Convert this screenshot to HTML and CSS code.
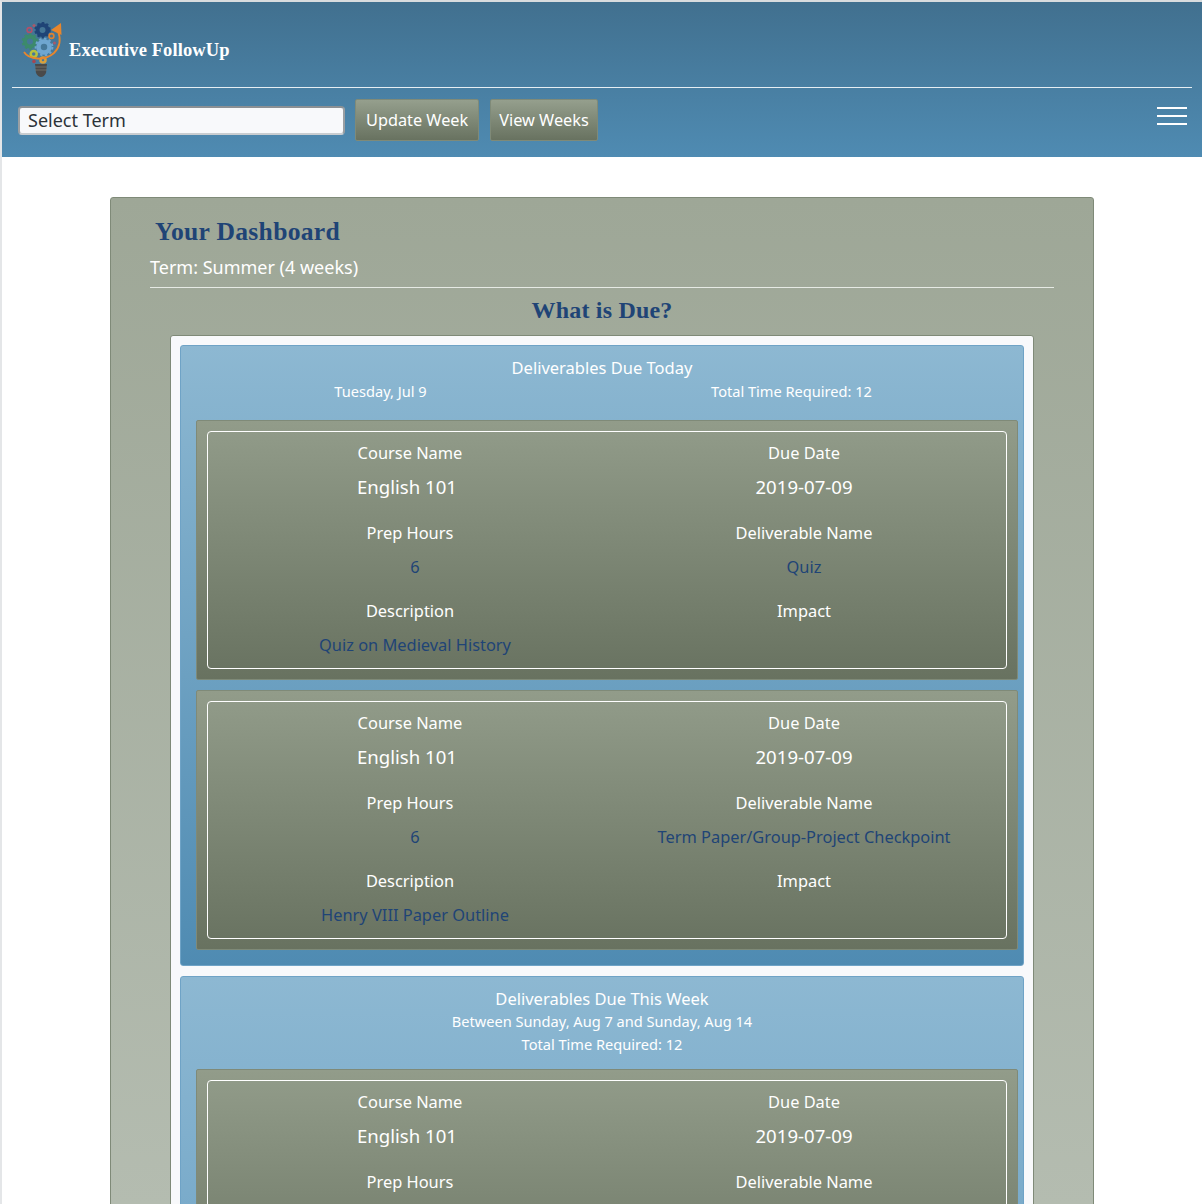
FILE: index.html
```html
<!DOCTYPE html>
<html lang="en">
<head>
<meta charset="utf-8">
<title>Executive FollowUp</title>
<link rel="stylesheet" href="styles.css">
</head>
<body>
<header class="topbar">
	<div class="brand">
		<svg class="logo" width="44" height="56" viewBox="19 22 44 56">
			<circle cx="41.5" cy="30" r="5" fill="none" stroke="#1f4476" stroke-width="4"/>
			<circle cx="41.5" cy="30" r="7.2" fill="none" stroke="#1f4476" stroke-width="2" stroke-dasharray="2.5 2.2"/>
			<circle cx="29" cy="41.5" r="5" fill="none" stroke="#3c8a6c" stroke-width="4"/>
			<circle cx="29" cy="41.5" r="7.4" fill="none" stroke="#3c8a6c" stroke-width="2" stroke-dasharray="2.5 2.3"/>
			<circle cx="43" cy="47" r="5.5" fill="none" stroke="#6fa6d0" stroke-width="4.5"/>
			<circle cx="43" cy="47" r="8.4" fill="none" stroke="#6fa6d0" stroke-width="2" stroke-dasharray="2.5 2.4"/>
			<circle cx="32.7" cy="54" r="3" fill="none" stroke="#b5c23f" stroke-width="2.5"/>
			<circle cx="42" cy="60" r="2.5" fill="none" stroke="#d9a13c" stroke-width="2.5"/>
			<circle cx="50.5" cy="36" r="2.4" fill="none" stroke="#e0812f" stroke-width="1.6"/>
			<circle cx="28.5" cy="30" r="2.4" fill="none" stroke="#b0506a" stroke-width="1.6"/>
			<circle cx="33" cy="25.5" r="1.6" fill="#a8596a"/>
			<circle cx="33" cy="61.5" r="1.8" fill="#a8454f"/>
			<circle cx="53.5" cy="43" r="1.5" fill="#a8596a"/>
			<path d="M23 52 C28 60 44 61 53 53 C59 47 60 39 57 31" fill="none" stroke="#e8862c" stroke-width="1.8"/>
			<path d="M50 30 L60 23 L60.5 35 Z" fill="#e8862c"/>
			<path d="M34 64 H46 L45 73 Q43 77 40 77 Q37 77 35 73 Z" fill="#4a4a4a"/>
			<path d="M34 67 H46 M34 70 H46" stroke="#7a7a72" stroke-width="0.8"/>
		</svg>
		<span class="brand_name">Executive FollowUp</span>
	</div>
	<div class="toolbar">
		<div class="term_select">Select Term</div>
		<button class="btn">Update Week</button>
		<button class="btn btn_small">View Weeks</button>
		<div class="burger"><span></span><span></span><span></span></div>
	</div>
</header>

<main class="panel">
	<h1 class="dash_title">Your Dashboard</h1>
	<div class="term_line">Term: Summer (4 weeks)</div>
	<h2 class="due_title">What is Due?</h2>

	<div class="due_box">
		<section class="due_group">
			<div class="group_title">Deliverables Due Today</div>
			<div class="group_split">
				<div>Tuesday, Jul 9</div>
				<div>Total Time Required: 12</div>
			</div>

			<div class="card">
				<div class="card_inner">
					<div class="lbl">Course Name</div><div class="lbl">Due Date</div>
					<div class="big big_left">English 101</div><div class="big">2019-07-09</div>
					<div class="lbl">Prep Hours</div><div class="lbl">Deliverable Name</div>
					<div class="val val_left">6</div><div class="val">Quiz</div>
					<div class="lbl">Description</div><div class="lbl">Impact</div>
					<div class="val val_left">Quiz on Medieval History</div><div class="val"></div>
				</div>
			</div>

			<div class="card">
				<div class="card_inner">
					<div class="lbl">Course Name</div><div class="lbl">Due Date</div>
					<div class="big big_left">English 101</div><div class="big">2019-07-09</div>
					<div class="lbl">Prep Hours</div><div class="lbl">Deliverable Name</div>
					<div class="val val_left">6</div><div class="val">Term Paper/Group-Project Checkpoint</div>
					<div class="lbl">Description</div><div class="lbl">Impact</div>
					<div class="val val_left">Henry VIII Paper Outline</div><div class="val"></div>
				</div>
			</div>
		</section>

		<section class="due_group">
			<div class="group_title">Deliverables Due This Week</div>
			<div class="group_sub">Between Sunday, Aug 7 and Sunday, Aug 14</div>
			<div class="group_sub">Total Time Required: 12</div>

			<div class="card">
				<div class="card_inner">
					<div class="lbl">Course Name</div><div class="lbl">Due Date</div>
					<div class="big big_left">English 101</div><div class="big">2019-07-09</div>
					<div class="lbl">Prep Hours</div><div class="lbl">Deliverable Name</div>
				</div>
			</div>
		</section>
	</div>
</main>
</body>
</html>
```

FILE: styles.css
```css
html, body{
	height: 1204px;
	overflow: hidden;
}

body{
	margin: 0;
	border-top: 2px solid #d9dcde;
	border-left: 2px solid #e4e6e8;
	box-sizing: border-box;
	background: #fff;
	color: #fff;
	font-family: "Noto Sans", sans-serif;
}

/*barra do topo*/
.topbar{
	height: 155px;
	padding: 0 10px;
	box-sizing: border-box;
	background: linear-gradient(#41708f, #4f8bb2);
}

.brand{
	display: flex;
	align-items: flex-start;
	height: 85px;
	border-bottom: 1px solid #e6eef3;
	padding-left: 8px;
}

.logo{
	margin-top: 20px;
}

.brand_name{
	margin-left: 5px;
	margin-top: 37px;
	font-family: "Liberation Serif", serif;
	font-weight: bold;
	font-size: 18.5px;
	line-height: 22px;
	letter-spacing: 0.1px;
}

.toolbar{
	display: flex;
	align-items: center;
	height: 64px;
	padding-left: 6px;
}

.term_select{
	width: 327px;
	height: 29px;
	box-sizing: border-box;
	border: 2px solid #9a9fa3;
	border-bottom-color: #c9cdd0;
	border-top-color: #8b9094;
	border-radius: 4px;
	background: #f8f9fb;
	color: #2c3338;
	font-size: 18px;
	line-height: 25px;
	padding-left: 8px;
	margin-right: 10px;
}

.btn{
	height: 42px;
	padding: 0 10px;
	margin-right: 11px;
	border: 1px solid #7f8a78;
	border-radius: 2px;
	background: linear-gradient(#959f8d, #687260);
	color: #fff;
	font-family: "Noto Sans", sans-serif;
	font-size: 16.3px;
}

.btn_small{
	padding: 0 8px;
}

.burger{
	margin-left: auto;
	margin-right: 5px;
	margin-top: -2px;
}

.burger span{
	display: block;
	width: 30px;
	height: 2px;
	background: #fff;
	margin-bottom: 6px;
}

/*painel principal*/
.panel{
	width: 984px;
	box-sizing: border-box;
	margin: 40px 0 0 108px;
	padding: 0 39px 20px;
	border: 1px solid #7f8a78;
	border-radius: 3px;
	background: linear-gradient(#9ea797 0, #b4bcb0 1007px);
}

.dash_title{
	margin: 18px 0 0 5px;
	color: #1f4476;
	font-family: "Liberation Serif", serif;
	font-size: 25.6px;
	line-height: 32px;
	letter-spacing: 0.3px;
}

.term_line{
	margin-top: 6px;
	padding-bottom: 7px;
	border-bottom: 1px solid #e6eae4;
	font-size: 18px;
	line-height: 26px;
}

.due_title{
	margin: 7px 0 0;
	text-align: center;
	color: #1f4476;
	font-family: "Liberation Serif", serif;
	font-size: 24px;
	line-height: 30px;
	letter-spacing: 0.2px;
}

.due_box{
	margin: 10px 20px 0;
	padding: 9px;
	border: 1px solid #7f8a78;
	border-radius: 3px;
	background: #f8f9fb;
}

.due_group{
	padding: 11px 15px 15px;
	margin-bottom: 10px;
	border: 1px solid #6fa3c6;
	border-radius: 3px;
	background: linear-gradient(#8db8d2, #4f8bb2);
	text-align: center;
}

.due_group:last-child{
	background: linear-gradient(#8db8d2 0, #74a7c8 300px);
}

.group_title{
	font-size: 16.5px;
	line-height: 22px;
}

.group_sub{
	font-size: 14.6px;
	line-height: 23px;
}

.group_split{
	display: grid;
	grid-template-columns: 411px 411px;
	margin: 1px 0 18px -21px;
	font-size: 14.6px;
	line-height: 22px;
}

.card{
	margin-top: 10px;
	margin-right: -10px;
	padding: 10px;
	border: 1px solid #7f8a78;
	border-radius: 2px;
	background: linear-gradient(#929c8a, #687260);
}

.group_sub + .card{
	margin-top: 13px;
}

.card_inner{
	display: grid;
	grid-template-columns: 1fr 1fr;
	padding: 0 5px;
	height: 238px;
	box-sizing: border-box;
	border: 1px solid #fff;
	border-radius: 4px;
	grid-auto-rows: min-content;
}

.lbl{
	height: 42px;
	line-height: 42px;
	font-size: 16.4px;
}

.big{
	height: 38px;
	line-height: 26px;
	font-size: 18.6px;
}

.big_left{
	padding-right: 6px;
}

.val{
	height: 36px;
	line-height: 26px;
	color: #1f4476;
	font-size: 16.4px;
}

.val_left{
	padding-left: 10px;
}
```
